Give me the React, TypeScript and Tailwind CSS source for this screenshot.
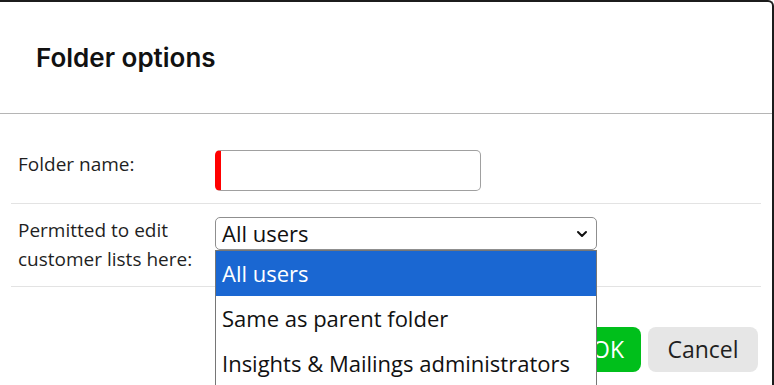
import { ChevronDown } from "lucide-react";

const options = ["All users", "Same as parent folder", "Insights & Mailings administrators"];

export default function App() {
  return (
    <div className="h-[385px] w-[774px] overflow-hidden bg-white font-['Open_Sans',sans-serif] text-[#1f1f1f]">
      <div className="h-[400px] rounded-tr-[6px] border-t-2 border-r-2 border-[#1c1c1c] bg-white">
        {/* header */}
        <div className="flex h-[112px] items-center border-b border-[#b5b5b5] pl-[36px]">
          <h2 className="font-['Inter',sans-serif] text-[26px] font-semibold text-[#111]">
            Folder options
          </h2>
        </div>

        {/* body */}
        <div className="px-[11px] pt-[24px]">
          <div className="flex border-b border-[#e3e3e3] py-[12px] pl-[7px]">
            <label className="w-[197px] shrink-0 text-[19px] leading-[29px]">Folder name:</label>
            <input
              type="text"
              className="h-[41px] w-[266px] rounded-[5px] border border-l-[6px] border-[#a0a0a0] border-l-[#ff0000] bg-white outline-none"
            />
          </div>

          <div className="flex border-b border-[#e3e3e3] py-[12px] pl-[7px]">
            <label className="w-[197px] shrink-0 text-[19px] leading-[29px]">
              Permitted to edit
              <br />
              customer lists here:
            </label>
            <div className="relative mt-px">
              <div className="flex h-[33px] w-[382px] items-center justify-between rounded-[5px] border border-[#8f8f8f] pl-[6px] pr-[6px] text-[22px] text-[#111]">
                <span>All users</span>
                <ChevronDown size={16} strokeWidth={3} className="text-[#111]" />
              </div>
              <ul className="absolute left-0 top-[33px] z-10 w-[382px] border border-[#767676] bg-white text-[22px] text-[#111]">
                {options.map((o, i) => (
                  <li
                    key={o}
                    className={`flex h-[45px] items-center pl-[6px] ${i === 0 ? "bg-[#1a67d2] text-white" : ""}`}
                  >
                    {o}
                  </li>
                ))}
              </ul>
            </div>
          </div>

          {/* footer */}
          <div className="flex justify-end gap-[7px] pr-[3px] pt-[40px]">
            <button className="h-[45px] w-[66px] rounded-[8px] bg-[#00bf1b] text-[23px] text-white">OK</button>
            <button className="h-[45px] w-[110px] rounded-[8px] bg-[#e6e6e6] text-[23px] text-[#1f1f1f]">Cancel</button>
          </div>
        </div>
      </div>
    </div>
  );
}
